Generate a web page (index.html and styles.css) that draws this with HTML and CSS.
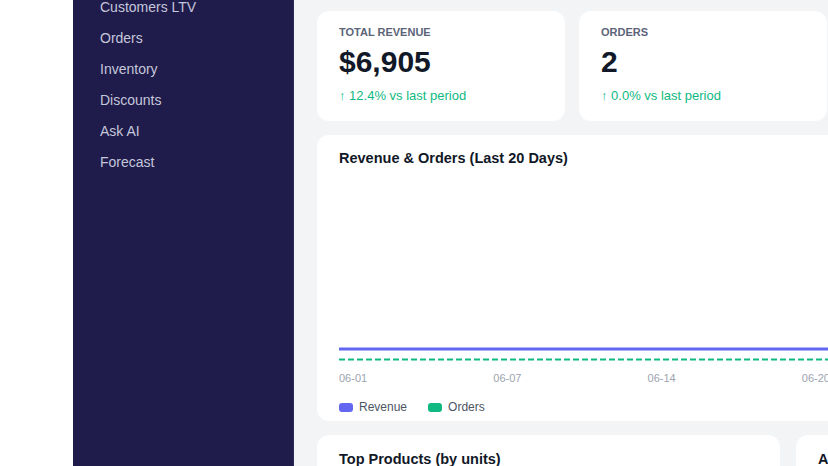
FILE: index.html
```html
<!DOCTYPE html>
<html lang="en">
<head>
    <meta charset="UTF-8">
    <meta name="viewport" content="width=device-width, initial-scale=1.0">
    <title>Dashboard</title>
    <link rel="stylesheet" href="styles.css">
</head>
<body>
<div class="page">
    <nav class="sidebar">
        <a class="nav-link">Customers LTV</a>
        <a class="nav-link">Orders</a>
        <a class="nav-link">Inventory</a>
        <a class="nav-link">Discounts</a>
        <a class="nav-link">Ask AI</a>
        <a class="nav-link">Forecast</a>
    </nav>

    <main class="main">
        <div class="stats-row">
            <div class="card stat-card">
                <div class="stat-label">Total Revenue</div>
                <div class="stat-value">$6,905</div>
                <div class="stat-change">&#8593; 12.4% vs last period</div>
            </div>
            <div class="card stat-card">
                <div class="stat-label">Orders</div>
                <div class="stat-value">2</div>
                <div class="stat-change">&#8593; 0.0% vs last period</div>
            </div>
            <div class="card stat-card"></div>
        </div>

        <div class="card chart-card">
            <h3 class="card-title">Revenue &amp; Orders (Last 20 Days)</h3>
            <div class="chart-area">
                <svg class="chart-svg" width="760" height="204" viewBox="0 0 760 204">
                    <!-- revenue, flat line -->
                    <line x1="0" y1="181" x2="760" y2="181" stroke="#6366f1" stroke-width="3" stroke-linecap="round"/>
                    <!-- orders, dashed -->
                    <line x1="0" y1="191.5" x2="760" y2="191.5" stroke="#10b981" stroke-width="2" stroke-dasharray="6 3"/>
                </svg>
                <div class="x-labels">
                    <span>06-01</span>
                    <span>06-07</span>
                    <span>06-14</span>
                    <span>06-20</span>
                </div>
            </div>
            <div class="legend">
                <span class="legend-item"><i class="swatch swatch-revenue"></i>Revenue</span>
                <span class="legend-item"><i class="swatch swatch-orders"></i>Orders</span>
            </div>
        </div>

        <div class="bottom-row">
            <div class="card list-card">
                <h3 class="card-title">Top Products (by units)</h3>
            </div>
            <div class="card list-card">
                <h3 class="card-title">A</h3>
            </div>
        </div>
    </main>
</div>
</body>
</html>
```

FILE: styles.css
```css
body {
    font-family: "Liberation Sans", Arial, sans-serif;
    margin: 0;
    background-color: #ffffff;
    overflow: hidden;
    height: 466px;
}
.page {
    display: flex;
    margin-left: 73px;
    min-height: 466px;
    width: 1100px;
}
.sidebar {
    width: 221px;
    flex-shrink: 0;
    background-color: #1f1b4b;
    border-right: 1px solid #2c2a5a;
    display: flex;
    flex-direction: column;
    gap: 15px;
    padding: 0 27px;
    margin-top: -1px;
    box-sizing: border-box;
}
.nav-link {
    color: #c5c7da;
    font-size: 14px;
    line-height: 16px;
    cursor: pointer;
}
.main {
    flex: 1;
    background-color: #f3f4f6;
    padding: 11px 0 0 23px;
}
.card {
    background-color: #ffffff;
    border-radius: 12px;
    box-sizing: border-box;
}
.stats-row {
    display: flex;
    gap: 14px;
}
.stat-card {
    width: 248px;
    height: 110px;
    padding: 14px 22px;
}
.stat-label {
    font-size: 11px;
    font-weight: bold;
    color: #5b6478;
    text-transform: uppercase;
    line-height: 14px;
}
.stat-value {
    font-size: 30px;
    font-weight: bold;
    color: #111827;
    line-height: 34px;
    margin-top: 6px;
}
.stat-change {
    font-size: 13px;
    color: #10b981;
    margin-top: 9px;
    line-height: 16px;
}
.chart-card {
    margin-top: 14px;
    width: 780px;
    height: 286px;
    padding: 13px 22px;
}
.card-title {
    margin: 0;
    font-size: 14.5px;
    line-height: 20px;
    color: #111827;
}
.chart-svg {
    display: block;
}
.x-labels {
    display: flex;
    justify-content: space-between;
    width: 491px;
    font-size: 11px;
    color: #9ca3af;
    margin-top: -1px;
    line-height: 14px;
}
.legend {
    display: flex;
    gap: 21px;
    margin-top: 15px;
    font-size: 12px;
    color: #4b5563;
    line-height: 14px;
}
.legend-item {
    display: flex;
    align-items: center;
}
.swatch {
    display: inline-block;
    width: 14px;
    height: 9px;
    border-radius: 3px;
    margin-right: 6px;
}
.swatch-revenue {
    background-color: #6366f1;
}
.swatch-orders {
    background-color: #10b981;
}
.bottom-row {
    display: flex;
    gap: 16px;
    margin-top: 14px;
}
.list-card {
    width: 463px;
    height: 200px;
    padding: 14px 22px;
}
```
